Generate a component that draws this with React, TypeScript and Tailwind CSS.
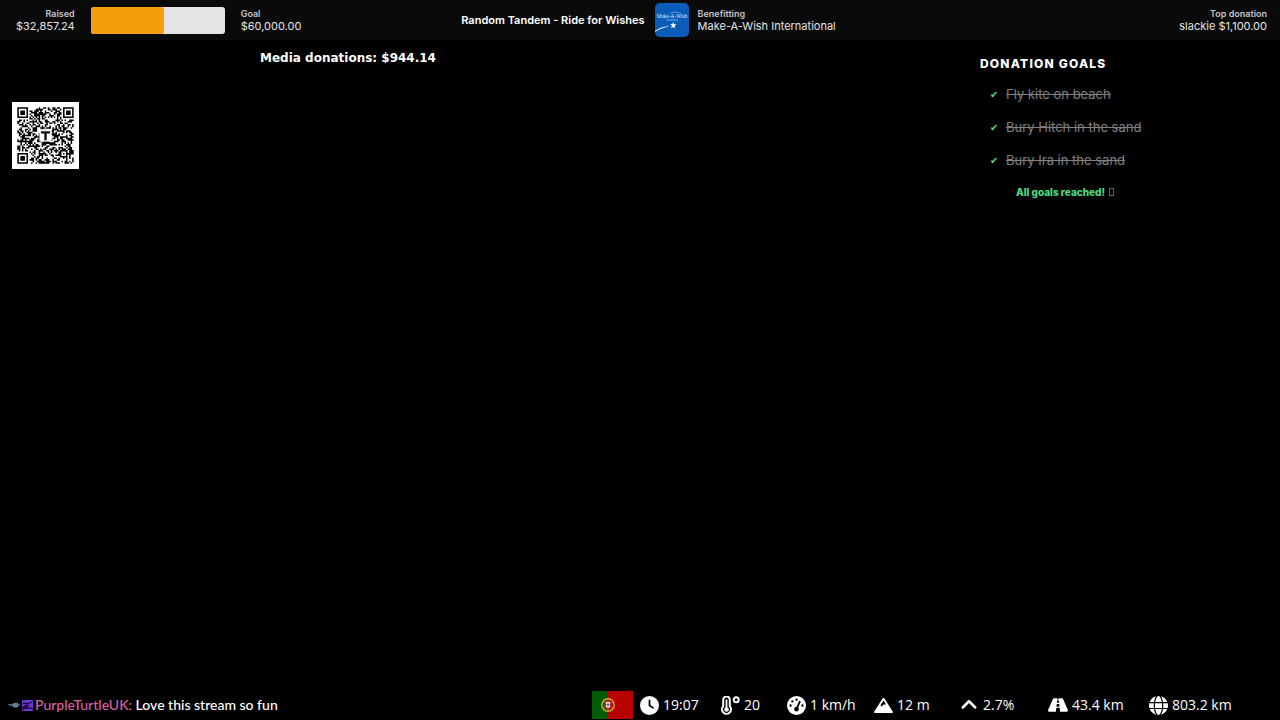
import React from 'react';
import { FaClock, FaGaugeHigh, FaAngleUp, FaGlobe } from 'react-icons/fa6';
import { FaMountain, FaRoad } from 'react-icons/fa';

interface Stat {
  label: string;
  value: string;
  icon: React.ReactNode;
}

const raised = 32857.24;
const goal = 60000;

const goals = ['Fly kite on beach', 'Bury Hitch in the sand', 'Bury Ira in the sand'];

const Thermometer = () => (
  <svg viewBox="0 0 19 19" className="size-[19px]" aria-hidden="true">
    <path
      d="M2.200 3.800a3.300 3.300 0 0 1 6.600 0v6.400a4.500 4.500 0 1 1-6.600 0z"
      fill="none"
      stroke="#fff"
      strokeWidth="2"
    />
    <circle cx="5.500" cy="13.500" r="2.300" fill="#fff" />
    <path d="M5.500 4.200v8" stroke="#fff" strokeWidth="1.800" strokeLinecap="round" />
    <circle cx="15.200" cy="3.800" r="2.500" fill="none" stroke="#fff" strokeWidth="2" />
  </svg>
);

const stats: Stat[] = [
  { label: 'Local time', value: '19:07', icon: <FaClock size={19} /> },
  { label: 'Temperature', value: '20', icon: <Thermometer /> },
  { label: 'Speed', value: '1 km/h', icon: <FaGaugeHigh size={19} /> },
  { label: 'Altitude', value: '12 m', icon: <FaMountain size={19} /> },
  { label: 'Gradient', value: '2.7%', icon: <FaAngleUp size={20} /> },
  { label: 'Distance today', value: '43.4 km', icon: <FaRoad size={20} /> },
  { label: 'Total distance', value: '803.2 km', icon: <FaGlobe size={19} /> },
];

const formatMoney = (value: number) =>
  `$${value.toLocaleString('en-US', { minimumFractionDigits: 2, maximumFractionDigits: 2 })}`;

const QR_SIZE = 37;

const finderModule = (x: number, y: number) => {
  const ring = Math.max(Math.abs(x - 3), Math.abs(y - 3));
  return ring === 3 || ring <= 1;
};

const buildQrPath = () => {
  let path = '';
  let seed = 20731;
  for (let y = 0; y < QR_SIZE; y++) {
    for (let x = 0; x < QR_SIZE; x++) {
      seed = (seed * 1103515245 + 12345) % 2147483648;
      let dark = seed / 2147483648 > 0.48;
      const right = x >= QR_SIZE - 8;
      const bottom = y >= QR_SIZE - 8;
      if (x < 8 && y < 8) dark = x < 7 && y < 7 && finderModule(x, y);
      else if (right && y < 8) dark = x > QR_SIZE - 8 && y < 7 && finderModule(x - QR_SIZE + 7, y);
      else if (x < 8 && bottom) dark = x < 7 && y > QR_SIZE - 8 && finderModule(x, y - QR_SIZE + 7);
      else if (x === 6) dark = y % 2 === 0;
      else if (y === 6) dark = x % 2 === 0;
      else if (x >= 28 && x <= 32 && y >= 28 && y <= 32) {
        dark = Math.max(Math.abs(x - 30), Math.abs(y - 30)) !== 1;
      }
      if (dark) path += `M${x} ${y}h1v1h-1z`;
    }
  }
  return path;
};

const qrPath = buildQrPath();

const QrCode = () => (
  <svg viewBox="-3.5 -3.5 44 44" className="size-[67px] bg-white" role="img" aria-label="Donation QR code">
    <path d={qrPath} fill="#000" />
    <rect x="14.5" y="14.5" width="8" height="8" fill="#fff" />
    <path d="M15.5 15.7h6v1.5h-2.2v4.5h-1.6v-4.5h-2.2z" fill="#111" />
  </svg>
);

const WishLogo = () => (
  <svg viewBox="0 0 34 34" className="size-[34px] rounded-[5px]" role="img" aria-label="Make-A-Wish">
    <rect width="34" height="34" fill="#0b5cb9" />
    <text
      x="17"
      y="15"
      fill="#dceafa"
      fontSize="5.3"
      fontFamily="Liberation Serif, serif"
      textAnchor="middle"
    >
      Make-A-Wish
    </text>
    <path d="M15 11c2-2.500 8-2.500 11 0" fill="none" stroke="#a9c9ee" strokeWidth=".5" />
    <path d="M11 17h12" stroke="#8ab4e3" strokeWidth=".8" />
    <path d="M0 28C4 25 9 23.500 15 23c-6 1.500-11 3-15 6z" fill="#fff" />
    <path d="M18.300 19l.9 2.200 2.400.1-1.900 1.500.7 2.400-2.100-1.300-2.100 1.300.7-2.400-1.900-1.500 2.400-.1z" fill="#fff" />
  </svg>
);

const PortugalFlag = () => (
  <svg viewBox="0 0 41 28" className="h-7 w-[41px]" role="img" aria-label="Portugal">
    <rect width="41" height="28" fill="#b80000" />
    <rect width="16" height="28" fill="#005c00" />
    <circle cx="16" cy="14" r="6.200" fill="none" stroke="#c9b32c" strokeWidth="1.400" />
    <path d="M10.500 11l11 6M10.500 17l11-6M16 8v12" stroke="#a89b2a" strokeWidth=".8" />
    <path d="M12.500 9.500h7v5.500a3.500 3.500 0 0 1-7 0z" fill="#d02020" />
    <path d="M14 11h4v4a2 2 0 0 1-4 0z" fill="#f0f0f0" />
    <path d="M16 11.500v4.500M14.500 13.500h3" stroke="#35539c" strokeWidth=".9" />
  </svg>
);

const ChatBadges = () => (
  <span className="flex items-center gap-0.5" aria-hidden="true">
    <svg viewBox="0 0 12 12" className="size-3">
      <path d="M0 5l4 .3L6 4h4l1 1.500h1v1l-2 .5-1 1.500H6L4 7 1 6.500z" fill="#487a96" />
      <path d="M5 4.500h4v1H5z" fill="#a3995e" />
      <path d="M6 7h4v1H7z" fill="#72a8bd" />
    </svg>
    <svg viewBox="0 0 11 11" className="size-[11px]">
      <rect width="11" height="11" rx="1" fill="#6d35d4" />
      <path d="M1 2.500l5 .5 4-1.500v1L6 4.500 1 4zM0 7l4-2h4L5 7l6 1v1L4 8.500 1 10z" fill="#160a36" />
    </svg>
  </span>
);

export default function App() {
  return (
    <div className="flex min-h-screen flex-col bg-black font-['Inter',sans-serif] text-white">
      {/* Campaign bar */}
      <header className="grid h-10 grid-cols-[1fr_auto_1fr] items-center bg-[#0a0a0a] pr-[13px] pl-4 text-[11px] leading-[13px] text-[#e4e4e7]">
        <div className="flex items-center">
          <div className="text-right">
            <div className="text-[9px] font-semibold text-[#c4c4c8]">Raised</div>
            <div>{formatMoney(raised)}</div>
          </div>
          <div
            className="mx-4 h-[27px] w-[134px] overflow-hidden rounded-[3px] bg-[#e4e4e7]"
            role="progressbar"
            aria-label="Raised"
            aria-valuenow={raised}
            aria-valuemax={goal}
          >
            <div className="h-full rounded-r-[2px] bg-[#f59e0b]" style={{ width: `${(raised / goal) * 100}%` }} />
          </div>
          <div>
            <div className="text-[9px] font-semibold text-[#c4c4c8]">Goal</div>
            <div>{formatMoney(goal)}</div>
          </div>
        </div>

        <div className="flex items-center pl-3.5">
          <h1 className="mr-2.5 text-[11px] font-semibold text-white">Random Tandem - Ride for Wishes</h1>
          <WishLogo />
          <div className="ml-[9px]">
            <div className="text-[9px] font-semibold text-[#c4c4c8]">Benefitting</div>
            <div>Make-A-Wish International</div>
          </div>
        </div>

        <div className="text-right">
          <div className="text-[9px] font-semibold text-[#c4c4c8]">Top donation</div>
          <div>slackie $1,100.00</div>
        </div>
      </header>

      <main className="flex flex-1 items-start">
        <div className="w-[260px] pt-[62px] pl-3">
          <QrCode />
        </div>
        <p className="pt-2 font-['DejaVu_Sans',sans-serif] text-xs leading-5 font-bold">
          Media donations: $944.14
        </p>

        {/* Donation goals */}
        <section className="mr-[100px] ml-auto w-[200px] pt-3.5">
          <h2 className="text-xs leading-5 font-extrabold tracking-widest">DONATION GOALS</h2>
          <ul className="mt-1 pl-2.5 text-[13px] text-[#808080]">
            {goals.map((item) => (
              <li key={item} className="flex h-[33px] items-center">
                <span className="w-4 font-['DejaVu_Sans',sans-serif] text-[10px] text-[#4ade80]">✔</span>
                <span className="line-through">{item}</span>
              </li>
            ))}
          </ul>
          <p className="mt-[5px] flex items-center gap-1 pl-9 text-[10px] leading-5 font-extrabold text-[#4ade80]">
            All goals reached!
            <span className="h-2 w-[5px] border border-[#2c8550]" aria-hidden="true" />
          </p>
        </section>
      </main>

      {/* Chat and ride stats */}
      <footer className="flex h-[29px] items-start justify-between pr-12 pl-2 font-['Open_Sans',sans-serif] text-sm">
        <p className="flex h-7 items-center gap-0.5 font-['Lato',sans-serif] font-medium">
          <ChatBadges />
          <span>
            <span className="text-[#d960a2]">PurpleTurtleUK: </span>
            Love this stream so fun
          </span>
        </p>
        <div className="flex items-center gap-1.5">
          <PortugalFlag />
          <ul className="grid grid-cols-[81px_66px_87px_86px_89px_100px_84px]">
            {stats.map((stat) => (
              <li key={stat.label} className="flex items-center gap-1 whitespace-nowrap" title={stat.label}>
                <span className="flex w-5 justify-center">{stat.icon}</span>
                {stat.value}
              </li>
            ))}
          </ul>
        </div>
      </footer>
    </div>
  );
}
